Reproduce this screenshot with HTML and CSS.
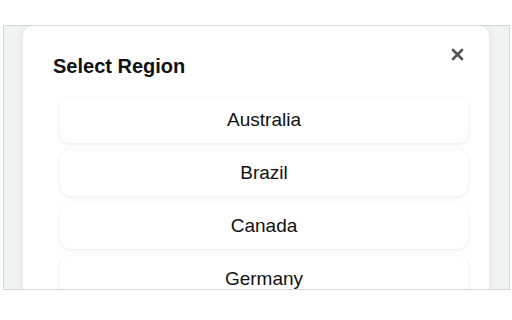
FILE: index.html
```
<!DOCTYPE html><html lang="en">
<head>
  <meta charset="UTF-8" />
  <meta name="viewport" content="width=device-width, initial-scale=1.0" />
  <title>Select Region</title>
  <link rel="stylesheet" href="styles.css">
</head>
<body>
  <div class="frame">
    <div class="modal">
      <div class="modal-header">
        <h2>Select Region</h2>
      </div>
      <button class="close" aria-label="Close">
        <svg width="13" height="13" viewBox="0 0 13 13"><path d="M2 2 L11 11 M11 2 L2 11" stroke="#555" stroke-width="2.6" stroke-linecap="round"/></svg>
      </button>
      <div class="regions">
        <div class="region">Australia</div>
        <div class="region">Brazil</div>
        <div class="region">Canada</div>
        <div class="region">Germany</div>
      </div>
    </div>
  </div>
</body>
</html>
```
FILE: styles.css
```
body {
  margin: 0;
  background: #fff;
  font-family: "Liberation Sans", Arial, sans-serif;
  color: #111;
}
.frame {
  margin: 25px 2px 0 3px;
  height: 263px;
  border: 1px solid #d6d6d6;
  background: #f1f2f4;
  overflow: hidden;
  padding: 0 20px 0 19px;
}
.modal {
  position: relative;
  background: #fff;
  height: 100%;
  border-radius: 10px 10px 0 0;
  box-shadow: 0 0 8px rgba(0, 0, 0, 0.06);
}
.modal-header {
  padding: 28px 25px 0 30px;
}
.modal-header h2 {
  margin: 0;
  font-size: 20px;
  line-height: 24px;
  font-weight: bold;
}
.close {
  position: absolute;
  top: 22px;
  right: 25px;
  padding: 0;
  border: none;
  background: none;
  cursor: pointer;
  line-height: 0;
}
.regions {
  display: flex;
  flex-direction: column;
  gap: 7px;
  padding: 19px 21px 0 37px;
}
.region {
  height: 46px;
  display: flex;
  align-items: center;
  justify-content: center;
  font-size: 19px;
  background: #fff;
  border-radius: 10px;
  box-shadow: 0 1px 4px rgba(0, 0, 0, 0.09);
  cursor: pointer;
}
```
